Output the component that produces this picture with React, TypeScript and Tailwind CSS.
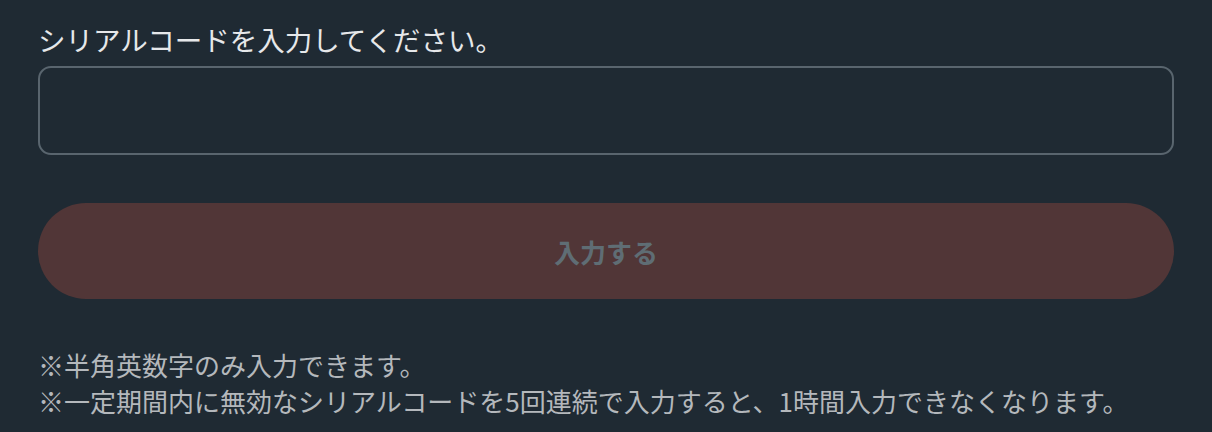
import React from "react";

export default function App() {
  const font = { fontFamily: '"Noto Sans CJK JP", "Noto Sans", sans-serif' };
  return (
    <div className="w-[1212px] h-[432px] bg-[#1f2a33] overflow-hidden" style={font}>
      <div className="px-[38px] pt-[20px] flex flex-col">
        <label className="text-[27.5px] leading-[39px] text-[#e6e8ea] mb-[7px]">
          シリアルコードを入力してください。
        </label>
        <input
          type="text"
          className="h-[89px] w-full rounded-[13px] border-2 border-[#59656e] bg-[#1f2a33] outline-none px-4 text-[26px] text-white"
        />
        <button
          type="button"
          disabled
          className="mt-[48px] h-[96px] w-full rounded-full bg-[#513637] text-[26px] font-bold text-[#5f6d74] flex items-center justify-center"
        >
          入力する
        </button>
        <div className="mt-[48px] text-[26px] leading-[36px] text-[#b4b8bc]">
          <p>※半角英数字のみ入力できます。</p>
          <p>※一定期間内に無効なシリアルコードを5回連続で入力すると、1時間入力できなくなります。</p>
        </div>
      </div>
    </div>
  );
}
